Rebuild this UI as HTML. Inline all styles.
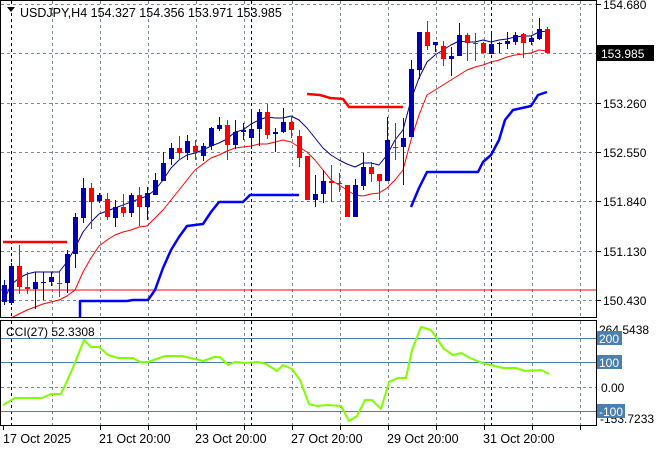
<!DOCTYPE html>
<html><head><meta charset="utf-8"><style>
html,body{margin:0;padding:0;background:#fff;}
body{width:660px;height:450px;overflow:hidden;font-family:"Liberation Sans",sans-serif;}
svg text{font-family:"Liberation Sans",sans-serif;font-size:12px;fill:#000;}
</style></head><body>
<svg id="s" width="660" height="450" xmlns="http://www.w3.org/2000/svg">
<rect width="660" height="450" fill="#fff"/>
<g id="grid" stroke="#7a8796" stroke-dasharray="3,3" stroke-width="1" fill="none"></g>
<g id="lines" fill="none"></g>
<g id="candles"></g>
<rect x="0.5" y="0.5" width="596" height="317" fill="none" stroke="#000"/>
<rect x="0.5" y="320.5" width="596" height="105" fill="none" stroke="#000"/>
<g id="axis"></g>
<path d="M7 7 L15 7 L11 12 Z" fill="#000"/>
<text x="20" y="17" style="font-size:12.5px">USDJPY,H4  154.327 154.356 153.971 153.985</text>
<text x="6" y="336" style="font-size:12px">CCI(27) 52.3308</text>
</svg>
<script>
var NS="http://www.w3.org/2000/svg";
function el(p,t,a,txt){var e=document.createElementNS(NS,t);for(var k in a)e.setAttribute(k,a[k]);if(txt)e.textContent=txt;document.getElementById(p).appendChild(e);return e;}
var gx=[52,100,148,196,244,292,340,388,436,484,532,580];
gx.forEach(function(x){el('grid','line',{x1:x+.5,y1:1,x2:x+.5,y2:317});el('grid','line',{x1:x+.5,y1:321,x2:x+.5,y2:425});});
[11,251,491].forEach(function(x){el('grid','line',{x1:x+.5,y1:1,x2:x+.5,y2:317,stroke:'#000'});el('grid','line',{x1:x+.5,y1:321,x2:x+.5,y2:425,stroke:'#000'});});
[4,53,103,152,201,251,300].forEach(function(y){el('grid','line',{x1:1,y1:y+.5,x2:596,y2:y+.5});});
el('grid','line',{x1:1,y1:387.5,x2:596,y2:387.5});
[338,362,411].forEach(function(y){el('lines','line',{x1:1,y1:y+.5,x2:596,y2:y+.5,stroke:'#4a7fb0','stroke-width':1});});
function pl(pts,c,w){el('lines','polyline',{points:pts,stroke:c,'stroke-width':w,'stroke-linejoin':'round'});}
pl("1,290 596,290","#f00",1);
pl("3,242 67,242","#f00",2.5);
pl("307,94 320,95 330,98 343,99 349,107 403,107","#f00",2.5);
pl("80,317 80,301 127,301 133,300 148,300 155,290 163,268 171,250 179,237 187,226 203,224 211,212 219,202 243,202 250,195 299,195","#00f",2.5);
pl("411,207 419,188 427,172 478,172 483,162 491,155 499,140 505,120 513,110 531,106 538,95 547,92","#00f",2.5);
pl("4,300 11,285 19,278 27,274 35,272 59,272 67,262 75,248 83,232 91,222 99,214 115,208 131,202 147,196 155,190 163,180 171,168 179,160 187,155 195,153 203,150 211,146 219,143 227,139 235,132 243,130 251,124 259,120 267,117 275,118 283,118 291,116 299,120 307,128 315,138 323,148 331,155 339,160 347,164 355,167 363,163 371,163 379,165 387,155 395,140 403,130 411,100 419,78 427,62 435,55 443,50 451,45 459,41 467,42 475,42 483,40 491,42 499,40 507,39 515,37 523,36 531,36 539,32 547,31","#00008b",1);
pl("11,318 27,310 43,304 59,300 67,296 75,290 83,272 91,258 99,246 107,240 115,235 123,232 131,230 139,227 147,226 155,218 163,210 171,200 179,190 187,180 195,170 203,164 211,158 219,155 227,151 235,148 243,147 251,146 259,144 267,144 275,142 283,140 291,142 299,147 307,152 315,160 323,170 331,180 339,185 347,190 355,195 363,196 371,194 379,193 387,188 395,180 403,170 411,140 419,115 427,95 435,90 443,85 451,80 459,75 467,70 475,67 483,65 491,62 499,60 507,57 515,55 523,54 531,53 539,50 547,51","#f00",1);
pl("3,405 15,398 25,398 42,398 51,394 61,394 72,370 84,340 91,347 99,347 108,355 118,358 133,358 140,362 148,362 165,356 182,356 203,361 214,357 220,357 228,365 235,362 245,363 258,362 266,364 277,371 283,365 292,369 300,380 309,404 317,406 328,405 341,406 349,421 357,416 365,400 372,400 381,409 389,382 398,378 406,378 412,350 421,327 431,330 444,349 453,355 461,353 470,358 482,363 495,366 503,368 516,368 525,371 541,370 549,374","#7fff00",2);
var C=[[4,285,302,280,305,1],[11,266,303,263,305,1],[19,266,287,245,294,0],[27,287,289,272,294,0],[35,282,289,272,309,1],[43,282,282,272,300,1],[51,277,282,272,286,1],[59,283,283,272,297,0],[67,254,283,250,293,1],[75,217,254,213,268,1],[83,188,218,178,223,1],[91,188,202,183,229,0],[99,195,201,193,203,1],[107,199,217,193,220,0],[115,207,218,200,227,1],[123,207,213,194,217,0],[131,195,213,193,217,1],[139,195,207,187,226,0],[147,193,207,187,220,1],[155,180,195,173,195,1],[163,163,181,152,181,1],[171,148,159,143,165,1],[179,148,153,136,160,0],[187,141,153,135,160,1],[195,146,152,140,160,0],[203,146,156,143,161,1],[211,128,146,127,150,1],[219,125,129,117,131,1],[227,125,145,120,160,0],[235,132,145,120,149,1],[243,130,132,123,140,1],[251,129,138,109,149,1],[259,112,129,109,146,1],[267,112,135,104,139,0],[275,132,134,128,152,1],[283,122,132,108,133,1],[291,122,130,116,138,0],[299,136,158,130,167,0],[307,156,200,156,200,0],[315,194,200,175,207,1],[323,181,194,170,203,1],[331,181,183,165,202,0],[339,183,184,173,192,0],[347,185,217,185,217,0],[355,185,217,179,217,1],[363,167,186,153,190,1],[371,167,174,162,182,0],[379,174,181,174,200,0],[387,140,181,117,181,1],[395,147,148,123,160,0],[403,138,147,118,185,1],[411,69,137,60,137,1],[419,32,70,32,79,1],[427,32,46,21,50,0],[435,42,45,42,52,1],[443,46,59,41,66,0],[451,56,59,47,76,1],[459,35,56,23,56,1],[467,35,43,33,61,0],[475,43,44,33,61,0],[483,43,53,42,53,0],[491,44,54,33,54,1],[499,43,44,42,53,1],[507,41,44,32,49,1],[515,35,42,32,45,1],[523,34,43,33,58,0],[531,38,42,36,45,1],[539,29,39,18,40,1],[547,29,53,27,53,0]];
C.forEach(function(c){var col=c[5]?'#0000b4':'#f00';
el('candles','line',{x1:c[0]+.5,y1:c[3],x2:c[0]+.5,y2:c[4],stroke:col,'stroke-width':1});
el('candles','rect',{x:c[0]-2,y:c[1],width:5,height:Math.max(1,c[2]-c[1]),fill:col});});
[[4,'154.680'],[103,'153.260'],[152,'152.550'],[201,'151.840'],[251,'151.130'],[300,'150.430']].forEach(function(a){
el('axis','line',{x1:597,y1:a[0]+.5,x2:601,y2:a[0]+.5,stroke:'#000'});el('axis','text',{x:603,y:a[0]+5},a[1]);});
el('axis','rect',{x:597,y:45,width:57,height:16,fill:'#000'});
el('axis','text',{x:601,y:58,style:'fill:#fff'},'153.985');
el('axis','text',{x:599,y:334},'264.5438');
el('axis','rect',{x:597,y:331,width:25,height:14,fill:'#4a7fb0'});
el('axis','text',{x:599,y:343,style:'fill:#fff'},'200');
el('axis','rect',{x:597,y:355,width:25,height:14,fill:'#4a7fb0'});
el('axis','text',{x:599,y:367,style:'fill:#fff'},'100');
el('axis','text',{x:601,y:392},'0.00');
el('axis','text',{x:600,y:423},'-153.7233');
el('axis','rect',{x:597,y:404,width:28,height:14,fill:'#4a7fb0'});
el('axis','text',{x:599,y:416,style:'fill:#fff'},'-100');
[3,100,148,196,244,292,340,388,436,484,532,580].forEach(function(x){el('axis','line',{x1:x+.5,y1:426,x2:x+.5,y2:430,stroke:'#000'});});
[[3,'17 Oct 2025'],[99,'21 Oct 20:00'],[195,'23 Oct 20:00'],[291,'27 Oct 20:00'],[387,'29 Oct 20:00'],[483,'31 Oct 20:00']].forEach(function(a){el('axis','text',{x:a[0],y:443,style:'font-size:12.5px'},a[1]);});
</script>
</body></html>
